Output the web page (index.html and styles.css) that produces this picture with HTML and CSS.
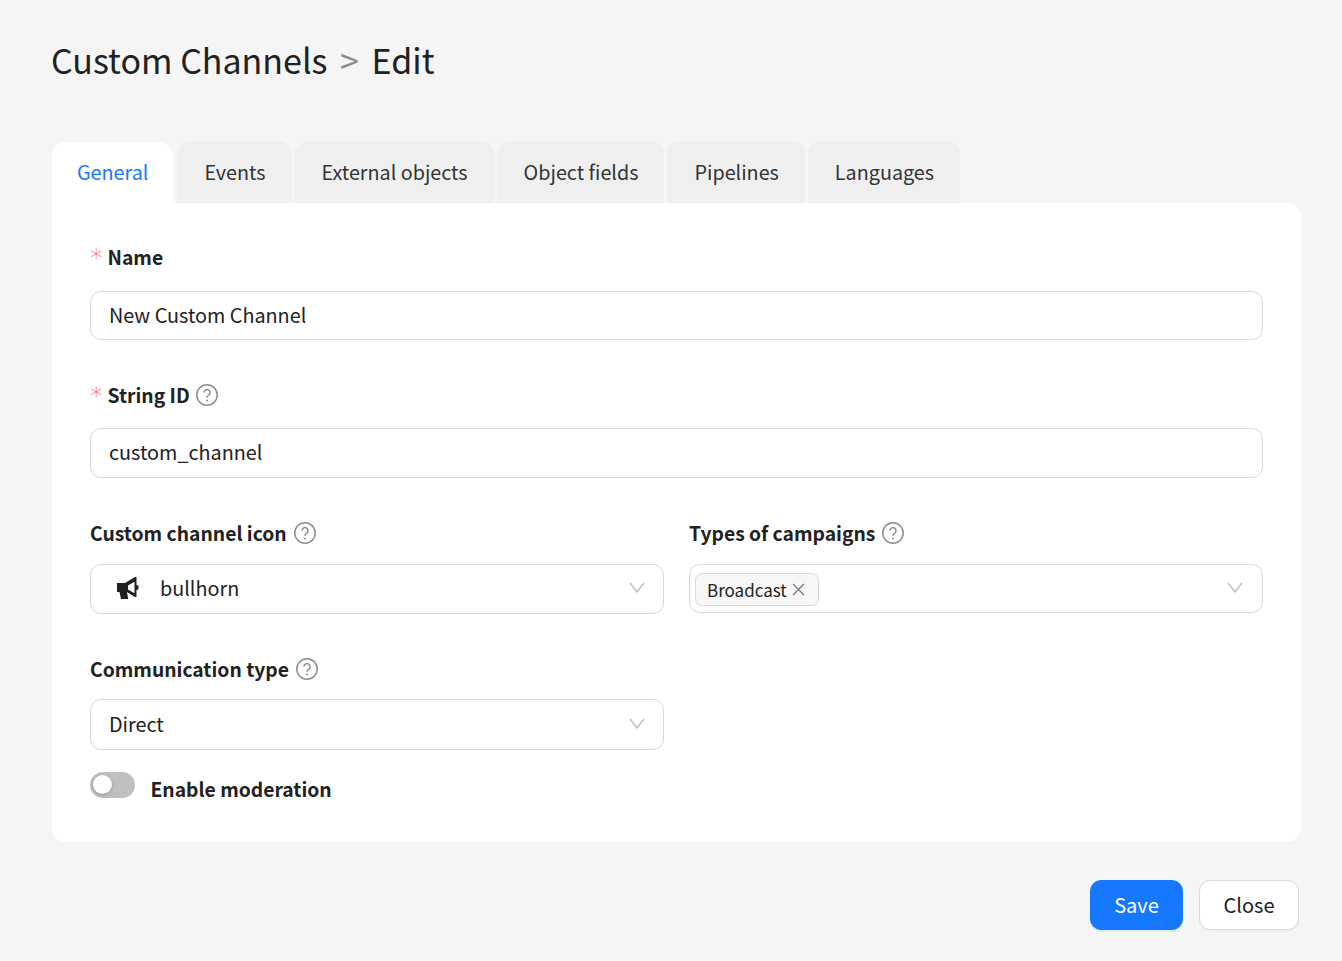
FILE: index.html
```html
<!DOCTYPE html>
<html lang="en">
<head>
    <meta charset="UTF-8">
    <title>Custom Channels - Edit</title>
    <link rel="stylesheet" href="styles.css">
</head>
<body>
    <h1 class="page-title">Custom Channels <span class="crumb-sep">&gt;</span> Edit</h1>

    <div class="tabs">
        <div class="tab active">General</div>
        <div class="tab">Events</div>
        <div class="tab">External objects</div>
        <div class="tab">Object fields</div>
        <div class="tab">Pipelines</div>
        <div class="tab">Languages</div>
    </div>

    <div class="card">
        <div class="field field-name">
            <div class="label label-req"><span class="req">*</span>Name</div>
            <div class="input input-name">New Custom Channel</div>
        </div>

        <div class="field field-string">
            <div class="label label-req"><span class="req">*</span>String ID
                <svg class="help" viewBox="0 0 22 22"><circle cx="11" cy="11" r="10.2" /><path d="M8 8.6a3 3 0 1 1 4.8 2.4c-1.1.8-1.8 1.3-1.8 2.8" /><circle class="dot" cx="11" cy="16.4" r="1" /></svg>
            </div>
            <div class="input input-string">custom_channel</div>
        </div>

        <div class="row">
            <div class="field">
                <div class="label">Custom channel icon
                    <svg class="help" viewBox="0 0 22 22"><circle cx="11" cy="11" r="10.2" /><path d="M8 8.6a3 3 0 1 1 4.8 2.4c-1.1.8-1.8 1.3-1.8 2.8" /><circle class="dot" cx="11" cy="16.4" r="1" /></svg>
                </div>
                <div class="input select select-icon">
                    <svg class="bullhorn" viewBox="0 0 22 22"><path fill-rule="evenodd" d="M0 6h8L18 0h1.5v8l2 .8v3.4l-2 .8V20H18l-8-5 1.2 7H4l-1.5-7H0zM11 8.5l6.5-3.7v11.4L11 12.5z" /></svg>
                    <span>bullhorn</span>
                    <svg class="chev" viewBox="0 0 16 11"><path d="M1 1l7 9 7-9" /></svg>
                </div>
            </div>
            <div class="field">
                <div class="label">Types of campaigns
                    <svg class="help" viewBox="0 0 22 22"><circle cx="11" cy="11" r="10.2" /><path d="M8 8.6a3 3 0 1 1 4.8 2.4c-1.1.8-1.8 1.3-1.8 2.8" /><circle class="dot" cx="11" cy="16.4" r="1" /></svg>
                </div>
                <div class="input select select-tags">
                    <span class="tag">Broadcast
                        <svg class="tag-x" viewBox="0 0 12 12"><path d="M1 1l10 10M11 1L1 11" /></svg>
                    </span>
                    <svg class="chev" viewBox="0 0 16 11"><path d="M1 1l7 9 7-9" /></svg>
                </div>
            </div>
        </div>

        <div class="row">
            <div class="field">
                <div class="label">Communication type
                    <svg class="help" viewBox="0 0 22 22"><circle cx="11" cy="11" r="10.2" /><path d="M8 8.6a3 3 0 1 1 4.8 2.4c-1.1.8-1.8 1.3-1.8 2.8" /><circle class="dot" cx="11" cy="16.4" r="1" /></svg>
                </div>
                <div class="input select select-comm">
                    <span>Direct</span>
                    <svg class="chev" viewBox="0 0 16 11"><path d="M1 1l7 9 7-9" /></svg>
                </div>
            </div>
        </div>

        <div class="switch-row">
            <div class="switch"><div class="knob"></div></div>
            <div class="switch-label">Enable moderation</div>
        </div>
    </div>

    <div class="actions">
        <button class="btn btn-primary">Save</button>
        <button class="btn">Close</button>
    </div>
</body>
</html>
```

FILE: styles.css
```css
* {
    box-sizing: border-box;
}
body {
    margin: 0;
    height: 961px;
    padding: 0 41px 0 52px;
    background: #f5f5f5;
    color: #212121;
    font-family: "Noto Sans CJK SC", "Noto Sans", sans-serif;
    font-size: 19.8px;
    overflow: hidden;
}
.page-title {
    margin: 0 0 0 -1px;
    padding-top: 36px;
    height: 141px;
    font-size: 34px;
    line-height: 48px;
    font-weight: 400;
}
.crumb-sep {
    color: #8c8c8c;
    margin: 0 5px;
}
.tabs {
    display: flex;
    gap: 3px;
    height: 62px;
    font-size: 19.75px;
}
.tab {
    padding: 0 26px 0 27px;
    line-height: 62px;
    background: #efefef;
    border-radius: 14px 14px 0 0;
    color: #333;
}
.tab.active {
    align-self: flex-end;
    height: 61px;
    line-height: 60px;
    padding: 0 25px;
    margin-right: 1px;
    background: #fff;
    color: #1677ff;
}
.card {
    height: 639px;
    padding: 38px 38px 0;
    background: #fff;
    border-radius: 0 14px 14px 14px;
}
.label {
    display: flex;
    align-items: center;
    height: 32px;
    margin-top: -1px;
    font-size: 19.3px;
    font-weight: 700;
    color: #212121;
}
.label-req {
    margin-top: 0;
    margin-bottom: -1px;
}
.req {
    width: 17.5px;
    flex: none;
    font-weight: 200;
    color: #ff5c50;
    font-family: "DejaVu Sans", sans-serif;
    font-size: 25px;
}
.help {
    width: 22px;
    height: 22px;
    margin-left: 7px;
    fill: none;
    stroke: #8c8c8c;
    stroke-width: 1.5;
}
.label-req .help {
    margin-left: 6px;
}
.help .dot {
    fill: #8c8c8c;
    stroke: none;
}
.input {
    display: flex;
    align-items: center;
    margin-top: 19px;
    padding: 0 18px 2px;
    background: #fff;
    border: 1px solid #d9d9d9;
    border-radius: 11px;
    color: #212121;
}
.input-name {
    height: 49px;
}
.field-string {
    margin-top: 39px;
}
.input-string {
    margin-top: 18px;
    height: 50px;
    padding-bottom: 4px;
}
.row {
    display: grid;
    grid-template-columns: 1fr 1fr;
    gap: 25px;
    margin-top: 40px;
}
.select {
    position: relative;
    margin-top: 15px;
}
.select-icon {
    height: 50px;
    padding-left: 26px;
    padding-bottom: 3px;
}
.select-tags {
    height: 49px;
    padding: 0 18px 0 5px;
}
.select-comm {
    height: 51px;
    margin-top: 14px;
}
.bullhorn {
    width: 22px;
    height: 22px;
    margin-right: 21px;
    fill: #1f1f1f;
}
.chev {
    position: absolute;
    right: 18px;
    top: 17px;
    width: 16px;
    height: 11px;
    fill: none;
    stroke: #bfbfbf;
    stroke-width: 1.4;
}
.select-comm .chev {
    top: 18px;
}
.select-tags .chev {
    right: 19px;
}
.tag {
    display: flex;
    align-items: center;
    height: 33px;
    margin-top: 2px;
    padding: 0 13px 0 11px;
    background: #f7f7f7;
    border: 1px solid #d9d9d9;
    border-radius: 7px;
    font-size: 17px;
}
.tag-x {
    width: 13px;
    height: 13px;
    margin-left: 5px;
    fill: none;
    stroke: #777;
    stroke-width: 1.2;
}
.switch-row {
    display: flex;
    gap: 15.5px;
    margin-top: 22px;
}
.switch {
    width: 45px;
    height: 26px;
    padding: 3px;
    background: #bfbfbf;
    border-radius: 13px;
}
.knob {
    width: 19px;
    height: 19px;
    background: #fff;
    border-radius: 50%;
    box-shadow: 0 1px 3px rgba(0, 0, 0, 0.25);
}
.switch-label {
    padding-top: 2px;
    font-size: 19.3px;
    line-height: 30px;
    font-weight: 700;
}
.actions {
    display: flex;
    justify-content: flex-end;
    gap: 16px;
    margin-top: 38px;
    padding-right: 2px;
}
.btn {
    height: 50px;
    width: 100px;
    padding: 0 0 2px;
    background: #fff;
    border: 1px solid #d9d9d9;
    border-radius: 11px;
    box-shadow: 0 2px 0 rgba(0, 0, 0, 0.02);
    font-family: inherit;
    font-size: 20px;
    color: #212121;
}
.btn-primary {
    width: 93px;
    background: #1677ff;
    border-color: #1677ff;
    color: #fff;
    box-shadow: 0 2px 0 rgba(5, 145, 255, 0.1);
}
```
